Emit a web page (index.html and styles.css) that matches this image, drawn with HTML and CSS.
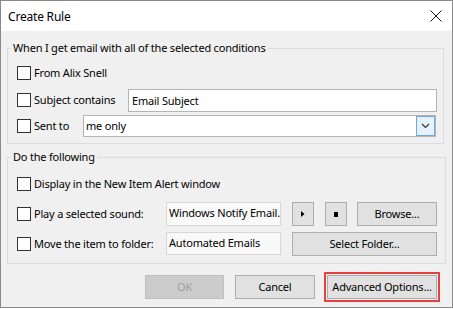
FILE: index.html
```html
<!DOCTYPE html>
<html>
<head>
<meta charset="utf-8">
<link rel="stylesheet" href="styles.css">
</head>
<body>
<div class="window">
  <div class="titlebar">
    <span class="title">Create Rule</span>
    <svg class="close" width="12" height="12" viewBox="0 0 12 12"><path d="M0.5 0.5 L11.5 11.5 M11.5 0.5 L0.5 11.5" stroke="#1a1a1a" stroke-width="1" fill="none"/></svg>
  </div>
  <div class="content">
    <fieldset class="group g1">
      <legend>When I get email with all of the selected conditions</legend>
      <div class="rows">
        <div class="row r1"><label class="check"><span class="box"></span>From Alix Snell</label></div>
        <div class="row r2"><label class="check lab-subject"><span class="box"></span>Subject contains</label><div class="textbox subject">Email Subject</div></div>
        <div class="row r3"><label class="check lab-sent"><span class="box"></span>Sent to</label>
          <div class="combo"><span class="combo-text">me only</span><span class="drop"><svg width="9" height="6" viewBox="0 0 9 6"><path d="M1 1 L4.5 4.5 L8 1" stroke="#333" stroke-width="1.2" fill="none"/></svg></span></div>
        </div>
      </div>
    </fieldset>
    <fieldset class="group g2">
      <legend>Do the following</legend>
      <div class="rows rows2">
        <div class="row a1"><label class="check"><span class="box"></span>Display in the New Item Alert window</label></div>
        <div class="row a2">
          <label class="check a-label"><span class="box"></span>Play a selected sound:</label>
          <div class="field">Windows Notify Email.</div>
          <button class="btn icon-btn play"><svg width="4" height="6" viewBox="0 0 4 6"><path d="M0 0 L3.5 3 L0 6 Z" fill="#000"/></svg></button>
          <button class="btn icon-btn stopbtn"><span class="stop"></span></button>
          <button class="btn browse">Browse...</button>
        </div>
        <div class="row a3">
          <label class="check a-label"><span class="box"></span>Move the item to folder:</label>
          <div class="field">Automated Emails</div>
          <button class="btn selfolder">Select Folder...</button>
        </div>
      </div>
    </fieldset>
    <div class="buttons">
      <button class="btn ok disabled">OK</button>
      <button class="btn cancel">Cancel</button>
      <button class="btn advanced">Advanced Options...</button>
    </div>
  </div>
</div>
</body>
</html>
```

FILE: styles.css
```css
* { box-sizing: border-box; }
html, body { margin: 0; padding: 0; background: #ffffff; }
body {
  width: 453px;
  height: 309px;
  font-family: "Noto Sans", "Open Sans", sans-serif;
  font-size: 11px;
  letter-spacing: -0.2px;
  color: #000;
}
.window {
  width: 453px;
  height: 308px;
  border: 1px solid #8a8a8a;
  display: flex;
  flex-direction: column;
  background: #f0f0f0;
  overflow: hidden;
}
.titlebar {
  height: 30px;
  background: #ffffff;
  display: flex;
  align-items: center;
  justify-content: space-between;
  padding: 0 10px 0 7px;
  flex: none;
}
.title { font-size: 12px; line-height: 16px; padding-top: 1px; }
.close { display: block; }
.content {
  flex: 1;
  padding: 0 6px;
  display: flex;
  flex-direction: column;
}
.group {
  margin: 0;
  border: 1px solid #dcdcdc;
  padding: 6px 6px 6px 3px;
  min-width: 0;
}
.group legend {
  padding: 0 2px;
  line-height: 16px;
  height: 16px;
}
.g1 { margin-top: 9px; margin-right: 2px; }
.g2 { margin-top: 5px; padding: 8px 9px 7px 3px; }
.rows { padding-left: 6px; display: flex; flex-direction: column; }
.row { display: flex; align-items: center; flex: none; }
.r1 { height: 22px; }
.r2 { height: 24px; margin-top: 4px; }
.r3 { height: 22px; margin-top: 3px; }
.a1 { height: 22px; }
.a2 { height: 24px; margin-top: 7px; }
.a3 { height: 24px; margin-top: 6px; }
.check {
  display: flex;
  align-items: center;
  white-space: nowrap;
  line-height: 16px;
}
.box {
  width: 14px;
  height: 14px;
  border: 1px solid #333333;
  background: #ffffff;
  margin-right: 3px;
  flex: none;
}
.lab-subject { width: 111px; flex: none; }
.lab-sent { width: 66px; flex: none; }
.a-label { width: 149px; flex: none; }
.textbox {
  height: 23px;
  border: 1px solid #b4b4b4;
  background: #fff;
  padding: 0 3px;
  line-height: 21px;
}
.subject { width: 309px; }
.combo {
  width: 353px;
  height: 22px;
  border: 1px solid #b4b4b4;
  background: #fff;
  display: flex;
  align-items: center;
  justify-content: space-between;
}
.combo-text { padding-left: 2px; line-height: 20px; }
.drop {
  width: 19px;
  height: 20px;
  border: 1px solid #6fa8e6;
  background: #e5f1fb;
  display: flex;
  align-items: center;
  justify-content: center;
}
.drop svg { display: block; }
.field {
  width: 115px;
  height: 24px;
  border: 1px solid #d7d7d7;
  background: #f9f9f9;
  padding: 0 2px;
  line-height: 20px;
  white-space: nowrap;
  overflow: hidden;
  margin-right: 11px;
  flex: none;
}
.a3 .field { height: 23px; align-self: flex-start; }
.btn {
  font: inherit;
  letter-spacing: inherit;
  color: #000;
  height: 24px;
  border: 1px solid #adadad;
  background: #e1e1e1;
  padding: 0;
  margin: 0;
  line-height: 20px;
  white-space: nowrap;
  flex: none;
}
.icon-btn { width: 22px; display: flex; align-items: center; justify-content: center; }
.icon-btn svg { display: block; }
.play { margin-right: 11px; }
.stopbtn { margin-right: 10px; }
.stop { width: 4px; height: 5px; background: #000; display: block; }
.browse { width: 80px; }
.selfolder { width: 145px; }
.buttons {
  margin-top: 11px;
  display: flex;
  justify-content: flex-end;
  padding-right: 9px;
}
.ok { width: 79px; margin-right: 11px; }
.cancel { width: 80px; margin-right: 12px; }
.disabled { background: #cccccc; border-color: #bfbfbf; color: #a0a0a0; }
.advanced {
  width: 110px;
  outline: 2px solid #e3403f;
  outline-offset: 1px;
}
```
